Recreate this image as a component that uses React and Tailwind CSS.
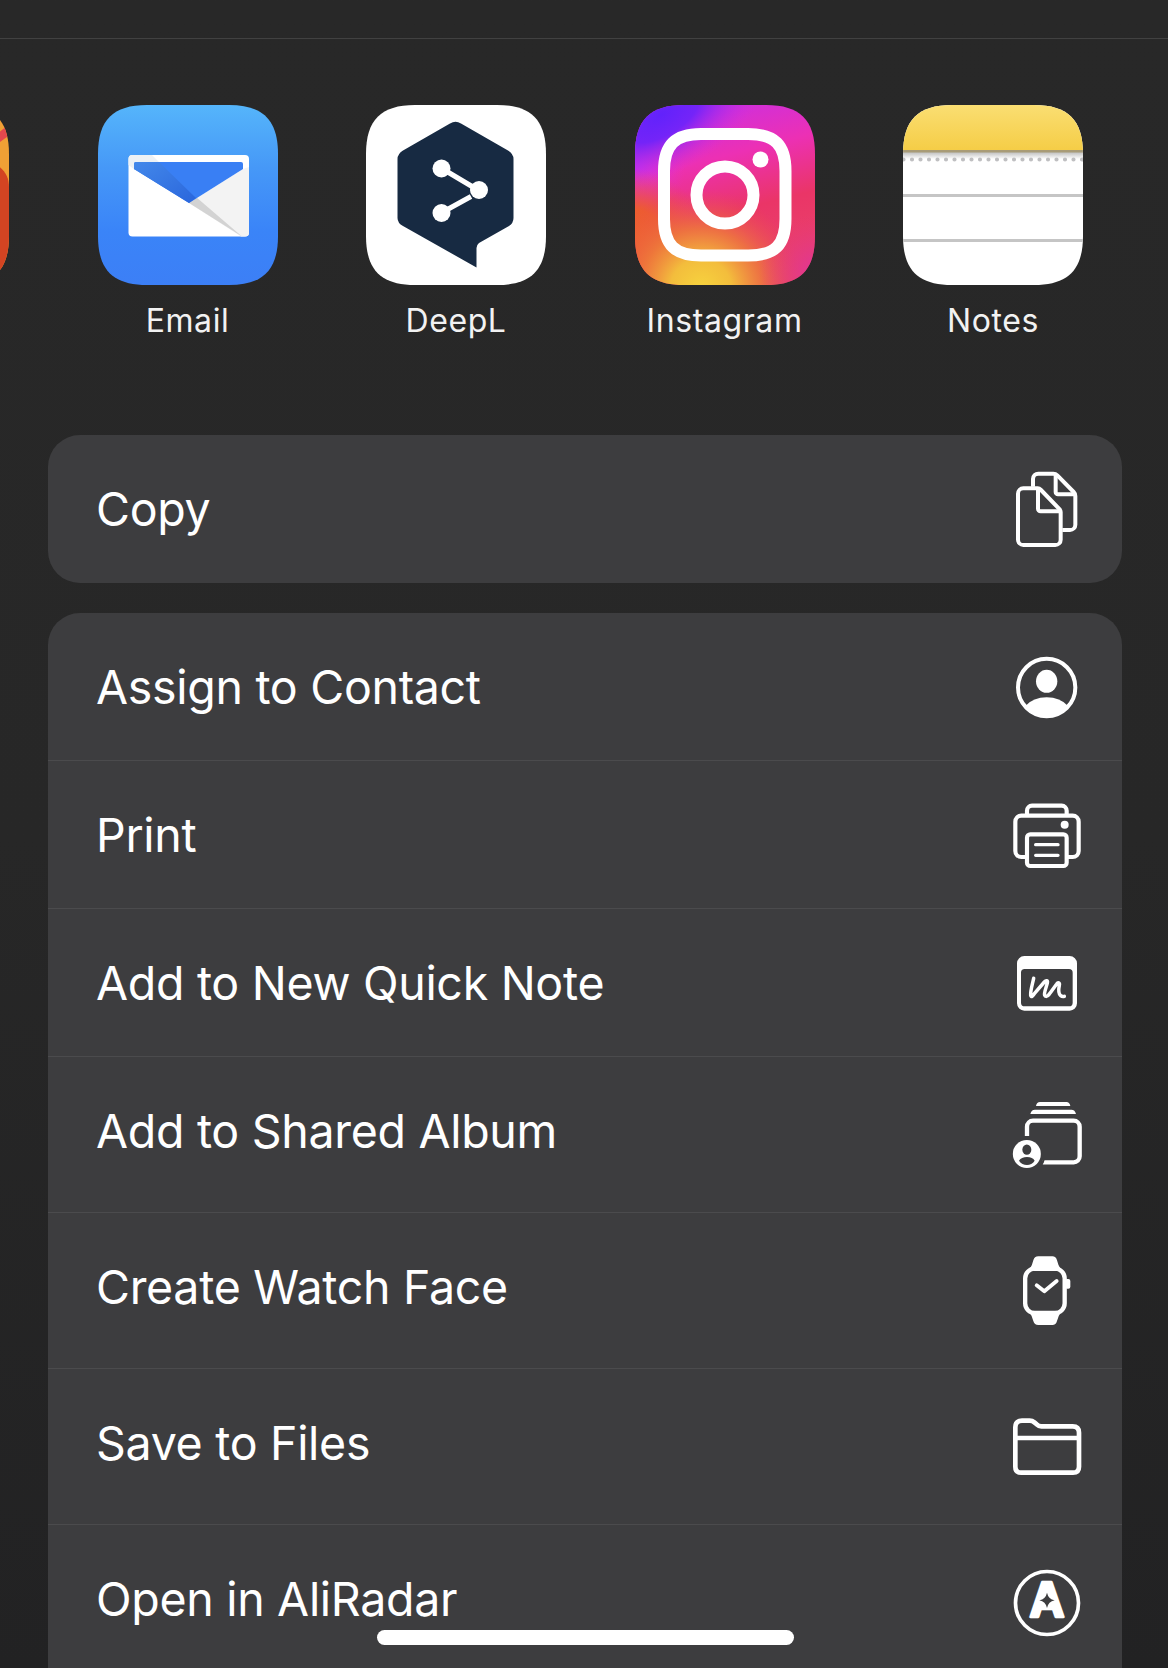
const SQUIRCLE =
  "M0 49C0 15 15 0 49 0H131C165 0 180 15 180 49V131C180 165 165 180 131 180H49C15 180 0 165 0 131Z";

/* APP TILE: every logo is clipped to the rounded home screen shape */
const AppTile = ({ id, children }) => (
  <svg className="block h-[180px] w-[180px]" viewBox="0 0 180 180">
    <defs>
      <clipPath id={id + "-clip"}>
        <path d={SQUIRCLE} />
      </clipPath>
    </defs>
    <g clipPath={`url(#${id}-clip)`}>{children}</g>
  </svg>
);

const OrangeLogo = () => (
  <AppTile id="orange">
    <rect width="180" height="180" fill="#f0a035" />
    <path d="M140 50L182 18V29L140 60Z" fill="#e4484d" />
    <path d="M100 40C150 50 180 56 180 82V180H60Z" fill="#d34422" />
  </AppTile>
);

const EmailLogo = () => (
  <AppTile id="email">
    <defs>
      <linearGradient id="email-sky" x1="0" y1="0" x2="0" y2="1">
        <stop offset="0" stopColor="#55b5fb" />
        <stop offset="0.35" stopColor="#4698f7" />
        <stop offset="0.7" stopColor="#3a84f8" />
        <stop offset="1" stopColor="#3c7ff6" />
      </linearGradient>
      <linearGradient id="email-flap" x1="0" y1="0" x2="1" y2="1">
        <stop offset="0" stopColor="#4388ea" />
        <stop offset="1" stopColor="#2a66dc" />
      </linearGradient>
    </defs>
    <rect width="180" height="180" fill="url(#email-sky)" />
    <rect x="30.5" y="50" width="120.5" height="81.5" rx="4" fill="#fff" />
    <path d="M91 98L145 64L151 62V128Q151 131.500 147 131.500H143Z" fill="#f3f3f3" />
    <path d="M91 98L98 92L144 131.500Z" fill="#d3d3d3" />
    <path d="M34 50H54L61 57H37V65L30.500 60V54Q30.500 50 34 50Z" fill="#edf1f5" />
    <path d="M36 59Q36 57 38 57H143Q145 57 145 59V64L91 98L36 64Z" fill="#397ff4" />
    <path d="M36 59Q36 57 38 57H61L98 93L91 98L36 64Z" fill="url(#email-flap)" />
  </AppTile>
);

const DeepLLogo = () => (
  <AppTile id="deepl">
    <rect width="180" height="180" fill="#fff" />
    <path
      d="M84 18.500Q89.500 15 95 18.500L142 45.500Q147.500 49 147.500 54V113Q147.500 118 143 121L113 138Q110.500 140 110.500 143V162.500L37 121Q31.500 118 31.500 113V54Q31.500 49 37 45.500Z"
      fill="#172a42"
    />
    <path d="M75 63L112 85M75 108L105 91.500" stroke="#fff" strokeWidth="5" />
    <circle cx="75.500" cy="63.500" r="9" fill="#fff" />
    <circle cx="113" cy="85" r="9" fill="#fff" />
    <circle cx="75.500" cy="108" r="9" fill="#fff" />
  </AppTile>
);

const InstagramLogo = () => (
  <AppTile id="insta">
    <defs>
      <linearGradient id="insta-base" x1="0.35" y1="0" x2="0.6" y2="1">
        <stop offset="0" stopColor="#cc2fe0" />
        <stop offset="0.3" stopColor="#ec30b4" />
        <stop offset="0.6" stopColor="#ea3567" />
        <stop offset="1" stopColor="#e9466b" />
      </linearGradient>
      <radialGradient id="insta-violet" gradientUnits="userSpaceOnUse" cx="0" cy="0" r="90" gradientTransform="translate(26 10) rotate(-30) scale(1.35 0.66)">
        <stop offset="0" stopColor="#6222fb" />
        <stop offset="0.35" stopColor="#7424f8" />
        <stop offset="1" stopColor="#d32fe6" stopOpacity="0" />
      </radialGradient>
      <radialGradient id="insta-magenta" gradientUnits="userSpaceOnUse" cx="0" cy="62" r="50">
        <stop offset="0" stopColor="#d432e8" />
        <stop offset="1" stopColor="#e233cf" stopOpacity="0" />
      </radialGradient>
      <radialGradient id="insta-yellow" gradientUnits="userSpaceOnUse" cx="0" cy="0" r="100" gradientTransform="translate(66 184) scale(1.02 1)">
        <stop offset="0" stopColor="#f7d43e" />
        <stop offset="0.3" stopColor="#f3bd3c" />
        <stop offset="0.6" stopColor="#ee7a3c" stopOpacity="0.85" />
        <stop offset="1" stopColor="#ec4a4e" stopOpacity="0" />
      </radialGradient>
      <radialGradient id="insta-orange" gradientUnits="userSpaceOnUse" cx="0" cy="132" r="68">
        <stop offset="0" stopColor="#ee652b" />
        <stop offset="0.4" stopColor="#ed5c30" />
        <stop offset="1" stopColor="#ec4a50" stopOpacity="0" />
      </radialGradient>
      <radialGradient id="insta-pink" gradientUnits="userSpaceOnUse" cx="184" cy="168" r="60">
        <stop offset="0" stopColor="#e0339c" />
        <stop offset="1" stopColor="#e6377a" stopOpacity="0" />
      </radialGradient>
    </defs>
    <rect width="180" height="180" fill="url(#insta-base)" />
    <rect width="180" height="180" fill="url(#insta-magenta)" />
    <rect width="180" height="180" fill="url(#insta-violet)" />
    <rect width="180" height="180" fill="url(#insta-orange)" />
    <rect width="180" height="180" fill="url(#insta-yellow)" />
    <rect width="180" height="180" fill="url(#insta-pink)" />
    <path
      d="M66 29H113C140 29 150.500 40 150.500 66V114C150.500 140 140 150.500 113 150.500H66C40 150.500 29 140 29 114V66C29 40 40 29 66 29Z"
      fill="none"
      stroke="#fff"
      strokeWidth="12"
    />
    <circle cx="90" cy="90" r="28.500" fill="none" stroke="#fff" strokeWidth="12" />
    <circle cx="125.500" cy="54.500" r="8" fill="#fff" />
  </AppTile>
);

const NotesLogo = () => (
  <AppTile id="notes">
    <defs>
      <linearGradient id="notes-top" x1="0" y1="0" x2="0" y2="1">
        <stop offset="0" stopColor="#fade72" />
        <stop offset="1" stopColor="#f5cd46" />
      </linearGradient>
      <linearGradient id="notes-shade" x1="0" y1="0" x2="0" y2="1">
        <stop offset="0" stopColor="#bdbdbd" />
        <stop offset="1" stopColor="#fff" />
      </linearGradient>
    </defs>
    <rect width="180" height="180" fill="#fff" />
    <rect width="180" height="45.500" fill="url(#notes-top)" />
    <rect y="47" width="180" height="7" fill="url(#notes-shade)" />
    <rect y="45" width="180" height="2.500" fill="#a89b77" />
    <path d="M0.500 54.500H181" stroke="#bfbfc1" strokeWidth="4.200" strokeLinecap="round" strokeDasharray="0 8.500" />
    <path d="M0 90.500H180M0 135.500H180" stroke="#c5c5c5" strokeWidth="3" />
  </AppTile>
);

/* ACTION ICONS: drawn at 3 units per pixel, strokes inherit the row colour */
const ActionIcon = ({ viewBox, strokeWidth = 12, children }) => (
  <svg
    className="h-20 w-[72px] shrink-0"
    viewBox={viewBox}
    fill="none"
    stroke="currentColor"
    strokeWidth={strokeWidth}
    strokeLinejoin="round"
  >
    {children}
  </svg>
);

const CopyIcon = () => (
  <ActionIcon viewBox="93 117 216 240">
    <path d="M159 170V147a16 16 0 0 1 16-16H220Q227 131 232 136L281 186Q286 191 286 198V284a16 16 0 0 1-16 16H247" />
    <path d="M227 133V186a7 7 0 0 0 7 7H284" />
    <path d="M173 175H130a16 16 0 0 0-16 16V329a16 16 0 0 0 16 16H226a16 16 0 0 0 16-16V246Q242 241 237 236L183 180Q178 175 173 175Z" />
    <path d="M174 177V236a8 8 0 0 0 8 8H241" />
  </ActionIcon>
);

const ContactIcon = () => (
  <ActionIcon viewBox="93 651 216 240">
    <circle cx="200" cy="772.500" r="86" />
    <ellipse cx="200" cy="754" rx="32" ry="34.500" fill="currentColor" stroke="none" />
    <path d="M136 828Q160 802 200 802Q240 802 264 828A86 86 0 0 1 136 828Z" fill="currentColor" stroke="none" />
  </ActionIcon>
);

const PrintIcon = () => (
  <ActionIcon viewBox="93 45 216 240" strokeWidth={12.5}>
    <path d="M141 231H124a18 18 0 0 1-18-18V125a18 18 0 0 1 18-18H278a18 18 0 0 1 18 18V213a18 18 0 0 1-18 18H260" />
    <path d="M141 105V92a15 15 0 0 1 15-15H245a15 15 0 0 1 15 15V105" />
    <rect x="141" y="163" width="119" height="95" rx="10" />
    <path d="M167 194H234M167 226H234" strokeWidth="10" strokeLinecap="round" />
    <circle cx="254" cy="134" r="12" fill="currentColor" stroke="none" />
  </ActionIcon>
);

const QuickNoteIcon = () => (
  <ActionIcon viewBox="93 489 216 240">
    <path
      fillRule="evenodd"
      fill="currentColor"
      stroke="none"
      d="M133 528H269a22 22 0 0 1 22 22V670a22 22 0 0 1-22 22H133a22 22 0 0 1-22-22V550a22 22 0 0 1 22-22ZM134 567a11 11 0 0 0-11 11V668a11 11 0 0 0 11 11H267a11 11 0 0 0 11-11V578a11 11 0 0 0-11-11Z"
    />
    <path
      d="M161 595C157 614 151 632 152 646C153 654 159 647 163 641L193 606C198 600 204 601 202 609C199 622 191 639 194 646C198 654 207 645 211 638L230 612C234 606 240 608 238 616C235 630 236 642 242 647Q247 651 253 649"
      strokeWidth="10.5"
      strokeLinecap="round"
    />
  </ActionIcon>
);

const SharedAlbumIcon = () => (
  <ActionIcon viewBox="93 45 216 240" strokeWidth={13}>
    <path d="M168 78Q170 66 180 66H259Q269 66 271 78ZM151 102Q154 89 165 89H274Q285 89 288 102Z" fill="currentColor" stroke="none" />
    <path d="M141 168V140a18 18 0 0 1 18-18H281a18 18 0 0 1 18 18V229a18 18 0 0 1-18 18H188" />
    <circle cx="140.500" cy="222" r="42" fill="currentColor" stroke="none" />
    <ellipse cx="140.500" cy="209" rx="13.500" ry="15.500" fill="#3d3d3f" stroke="none" />
    <path d="M117 242Q124 231 141 231Q158 231 164 242Q155 255 141 255Q126 255 117 242Z" fill="#3d3d3f" stroke="none" />
    <path d="M182 256Q190 248 192 236" stroke="#3d3d3f" strokeWidth="6" />
  </ActionIcon>
);

const WatchIcon = () => (
  <ActionIcon viewBox="93 513 216 240" strokeWidth={13}>
    <rect x="135.500" y="566" width="118.500" height="133" rx="29" />
    <path d="M148 569Q157 556 160 541Q163 529 175 529H217Q228 529 231 541Q234 556 243 569L230 573H163ZM148 696Q157 709 160 723Q163 735 175 735H217Q228 735 231 723Q234 709 243 696L230 693H163Z" fill="currentColor" stroke="none" />
    <rect x="255" y="597" width="16" height="29" rx="6" fill="currentColor" stroke="none" />
    <path d="M170 616L193 634L230 603" strokeWidth="11.5" strokeLinecap="round" />
  </ActionIcon>
);

const FolderIcon = () => (
  <ActionIcon viewBox="93 51 216 240" strokeWidth={14}>
    <path d="M106 112Q106 92 126 92H149Q157 92 163 97L170 103Q176 109 184 109H278Q297 109 297 128V230Q297 248 279 248H124Q106 248 106 230Z" />
    <path d="M106 144H297" />
  </ActionIcon>
);

const AliRadarIcon = () => (
  <ActionIcon viewBox="93 519 216 240" strokeWidth={11}>
    <circle cx="201" cy="639" r="94.500" />
    <text
      x="201"
      y="682"
      textAnchor="middle"
      fontFamily="Inter, sans-serif"
      fontSize="142"
      fontWeight="700"
      fill="currentColor"
      strokeWidth="7"
    >
      A
    </text>
    <path d="M201 600L226 655H176Z" fill="currentColor" stroke="none" />
    <path d="M201 608Q205 627 224 631Q205 635 201 654Q197 635 178 631Q197 627 201 608Z" fill="#3d3d3f" stroke="none" />
  </ActionIcon>
);

const apps = [
  { name: "", Logo: OrangeLogo },
  { name: "Email", Logo: EmailLogo },
  { name: "DeepL", Logo: DeepLLogo },
  { name: "Instagram", Logo: InstagramLogo },
  { name: "Notes", Logo: NotesLogo },
];

const actions = [
  { label: "Assign to Contact", Icon: ContactIcon },
  { label: "Print", Icon: PrintIcon },
  { label: "Add to New Quick Note", Icon: QuickNoteIcon },
  { label: "Add to Shared Album", Icon: SharedAlbumIcon, tall: true },
  { label: "Create Watch Face", Icon: WatchIcon, tall: true },
  { label: "Save to Files", Icon: FolderIcon, tall: true },
  { label: "Open in AliRadar", Icon: AliRadarIcon, tall: true },
];

const ActionRow = ({ label, Icon, tall, divider }) => (
  <button
    className={`flex w-full items-center justify-between border-b pr-[39px] pl-[48px] text-left ${
      tall ? "h-[156px]" : "h-[148px]"
    } ${divider ? "border-[#4b4b4d]" : "border-transparent"}`}
  >
    <span
      className={`text-[46.5px] leading-none font-normal tracking-[-0.3px] ${
        tall ? "pb-[6px]" : "pt-[2px]"
      }`}
    >
      {label}
    </span>
    <Icon />
  </button>
);

export default function App() {
  return (
    <div className="relative h-[1668px] w-[1168px] overflow-hidden bg-linear-to-b from-[#282828] via-[#272727] to-[#222223] font-['Inter',sans-serif] text-white">
      <div className="h-[39px] border-b border-[#414141]" />

      {/* APPS */}
      <div className="-ml-[171px] flex w-max gap-[88.5px] pt-[66px]">
        {apps.map(({ name, Logo }) => (
          <div key={name} className="flex w-[180px] flex-col items-center">
            <Logo />
            <span className="mt-4 h-10 text-[32px] leading-10 tracking-[0.6px] text-[#f2f2f2]">
              {name}
            </span>
          </div>
        ))}
      </div>

      {/* ACTIONS */}
      <div className="mt-[94px] ml-12 flex w-[1074px] flex-col gap-[30px]">
        <div className="overflow-hidden rounded-[32px] bg-[#3d3d3f]">
          <ActionRow label="Copy" Icon={CopyIcon} />
        </div>
        <div className="overflow-hidden rounded-t-[32px] bg-[#3d3d3f]">
          {actions.map((action, index) => (
            <ActionRow
              key={action.label}
              {...action}
              divider={index < actions.length - 1}
            />
          ))}
        </div>
      </div>

      {/* HOME INDICATOR */}
      <div className="absolute top-[1630px] left-[377px] h-[15px] w-[417px] rounded-full bg-white" />
    </div>
  );
}
